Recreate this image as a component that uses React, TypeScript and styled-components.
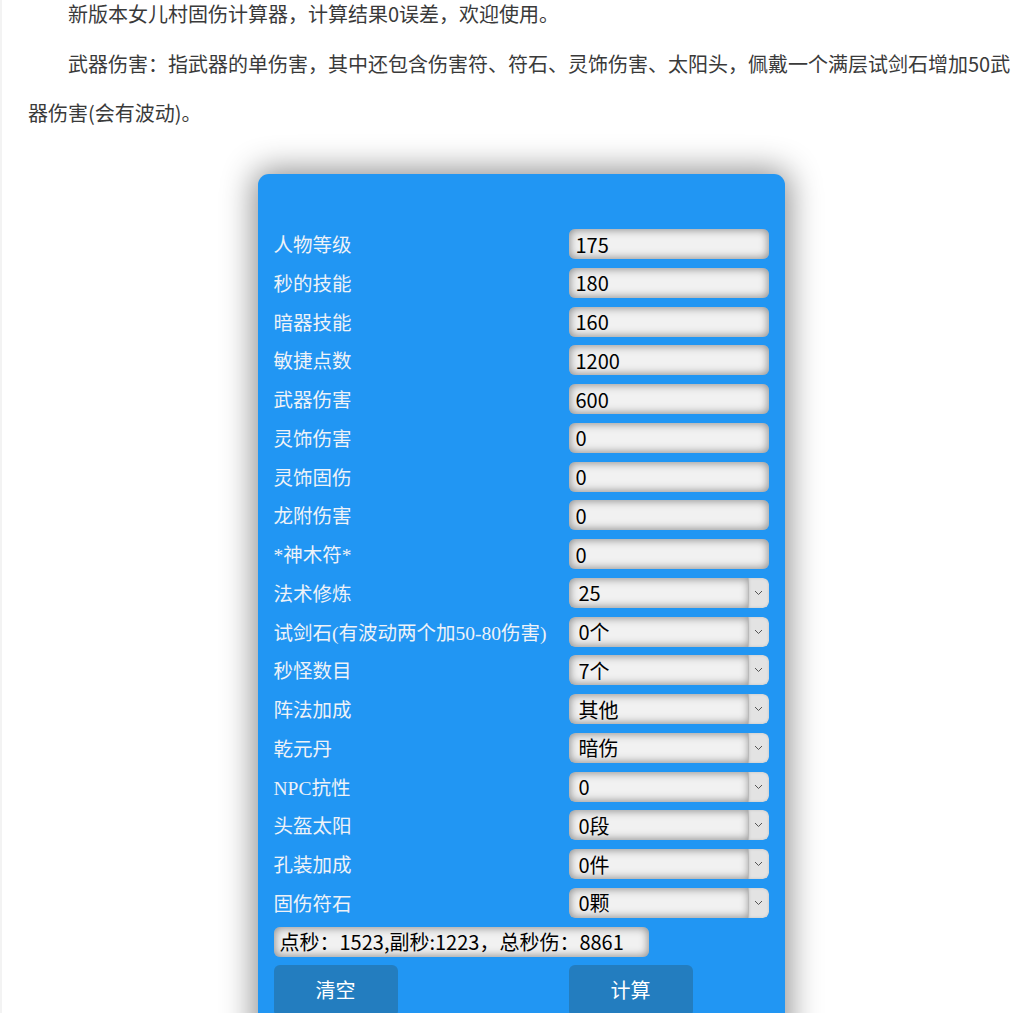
import React from "react";
import styled, { createGlobalStyle } from "styled-components";

const GlobalStyle = createGlobalStyle`
  html, body { margin: 0; padding: 0; background: #ffffff; }
  body {
    font-family: "Noto Sans CJK SC", "Noto Sans", sans-serif;
    overflow: hidden;
  }
  * { box-sizing: border-box; }
`;

const Page = styled.div`
  padding: 0 8px 40px 26px;
  border-left: 2px solid #f3f3f3;
  margin-top: -11px;
`;

const Paragraph = styled.p`
  margin: 0;
  font-size: 20px;
  line-height: 49.5px;
  color: #3a3a3a;
  text-indent: 40px;
  font-family: "Noto Sans CJK SC", sans-serif;
`;

const Panel = styled.div`
  width: 527px;
  margin: 36.5px auto 0;
  background: #2196f3;
  border-radius: 11px;
  box-shadow: 0 0 32px 4px rgba(0, 0, 0, 0.45);
  padding: 55px 16px 30px;
`;

const Form = styled.div`
  display: grid;
  grid-template-columns: 295px 200px;
  row-gap: 8.76px;
  align-items: center;
`;

const Label = styled.label`
  display: block;
  height: 30px;
  font-size: 19.5px;
  color: #eef2f8;
  font-family: "Liberation Serif", "Noto Sans CJK SC", serif;
  white-space: nowrap;
  line-height: 30px;
  transform: translateY(2px);
`;

const fieldBase = `
  height: 30px;
  border: none;
  border-radius: 6px;
  background: #f1f1f1;
  box-shadow: inset 0 0 8px 1px rgba(0, 0, 0, 0.42);
  font-family: "Noto Sans CJK SC", sans-serif;
  font-size: 20px;
  color: #000;
  outline: none;
`;

const TextInput = styled.input`
  ${fieldBase}
  width: 200px;
  padding: 0 7px;
`;

const SelectWrap = styled.div`
  display: flex;
  width: 200px;
  height: 30px;
  border-radius: 6px;
  overflow: hidden;
`;

const SelectBox = styled.select`
  ${fieldBase}
  flex: 1;
  border-radius: 6px 0 0 6px;
  appearance: none;
  -webkit-appearance: none;
  padding: 0 0 0 10px;
  min-width: 0;
`;

const Arrow = styled.span`
  width: 21px;
  height: 30px;
  background: #e3e3e3;
  border-left: 1px solid #b9b9b9;
  border-radius: 0 6px 6px 0;
  box-shadow: inset 0 0 3px rgba(0,0,0,0.15);
  display: flex;
  align-items: center;
  justify-content: center;
  margin-left: -2px;
`;

const Result = styled.div`
  grid-column: 1 / span 2;
  ${fieldBase}
  width: 375px;
  display: flex;
  align-items: center;
  padding: 0 6px;
`;

const ButtonRow = styled.div`
  grid-column: 1 / span 2;
  display: grid;
  grid-template-columns: 295px 200px;
  margin-top: -0.76px;
`;

const Button = styled.button`
  width: 124px;
  height: 52px;
  border: none;
  border-radius: 6px;
  background: #237dbf;
  color: #ffffff;
  font-family: "Noto Sans CJK SC", sans-serif;
  font-size: 20px;
  padding: 0 0 2px;
  cursor: pointer;
`;

type Field = { label: string; value: string; select?: boolean };

const fields: Field[] = [
  { label: "人物等级", value: "175" },
  { label: "秒的技能", value: "180" },
  { label: "暗器技能", value: "160" },
  { label: "敏捷点数", value: "1200" },
  { label: "武器伤害", value: "600" },
  { label: "灵饰伤害", value: "0" },
  { label: "灵饰固伤", value: "0" },
  { label: "龙附伤害", value: "0" },
  { label: "*神木符*", value: "0" },
  { label: "法术修炼", value: "25", select: true },
  { label: "试剑石(有波动两个加50-80伤害)", value: "0个", select: true },
  { label: "秒怪数目", value: "7个", select: true },
  { label: "阵法加成", value: "其他", select: true },
  { label: "乾元丹", value: "暗伤", select: true },
  { label: "NPC抗性", value: "0", select: true },
  { label: "头盔太阳", value: "0段", select: true },
  { label: "孔装加成", value: "0件", select: true },
  { label: "固伤符石", value: "0颗", select: true },
];

const Chevron = () => (
  <svg width="9" height="6" viewBox="0 0 9 6" fill="none">
    <polyline points="1,1 4.5,4.5 8,1" stroke="#555" strokeWidth="1" />
  </svg>
);

export default function App() {
  return (
    <>
      <GlobalStyle />
      <Page>
        <Paragraph>新版本女儿村固伤计算器，计算结果0误差，欢迎使用。</Paragraph>
        <Paragraph>
          武器伤害：指武器的单伤害，其中还包含伤害符、符石、灵饰伤害、太阳头，佩戴一个满层试剑石增加50武器伤害(会有波动)。
        </Paragraph>
        <Panel>
          <Form>
            {fields.map((f) => (
              <React.Fragment key={f.label}>
                <Label>{f.label}</Label>
                {f.select ? (
                  <SelectWrap>
                    <SelectBox defaultValue={f.value}>
                      <option value={f.value}>{f.value}</option>
                    </SelectBox>
                    <Arrow>
                      <Chevron />
                    </Arrow>
                  </SelectWrap>
                ) : (
                  <TextInput defaultValue={f.value} />
                )}
              </React.Fragment>
            ))}
            <Result>点秒：1523,副秒:1223，总秒伤：8861</Result>
            <ButtonRow>
              <Button>清空</Button>
              <Button>计算</Button>
            </ButtonRow>
          </Form>
        </Panel>
      </Page>
    </>
  );
}
